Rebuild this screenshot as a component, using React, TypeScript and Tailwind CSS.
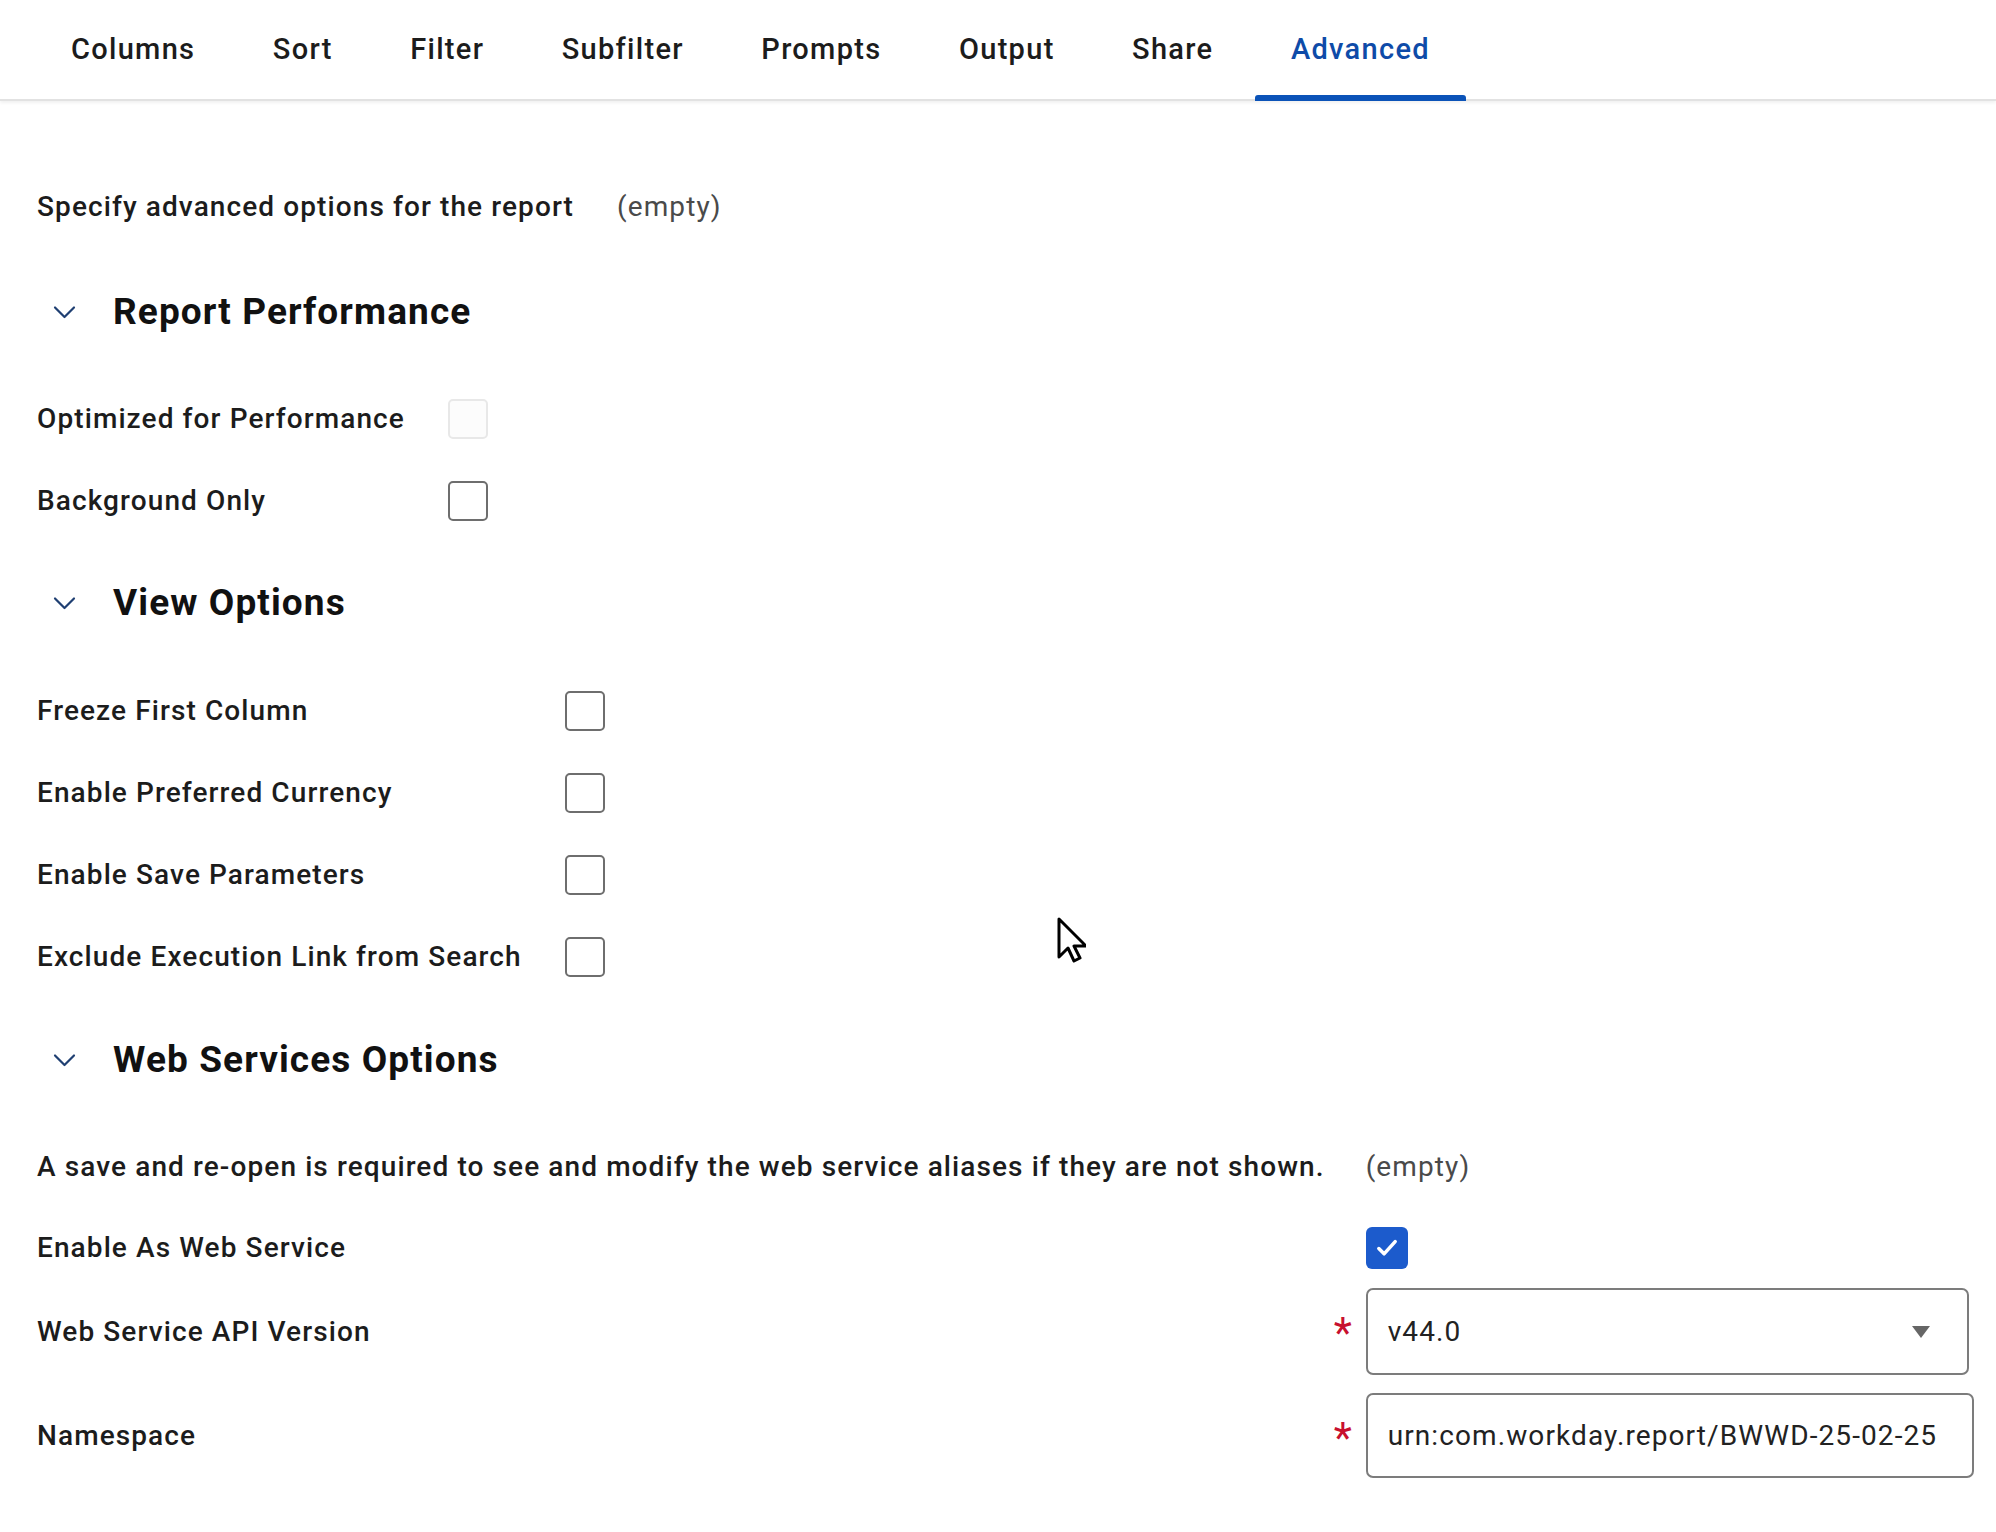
import React from "react";

const tabs = ["Columns", "Sort", "Filter", "Subfilter", "Prompts", "Output", "Share", "Advanced"];

function Checkbox({ checked = false, disabled = false }: { checked?: boolean; disabled?: boolean }) {
  if (checked) {
    return (
      <div className="w-[42px] h-[42px] rounded-[6px] bg-[#1c5bcc] flex items-center justify-center">
        <svg width="28" height="28" viewBox="0 0 24 24" fill="none">
          <path d="M5 12.5l4.5 4.5L19 6.5" stroke="white" strokeWidth="3" strokeLinecap="round" strokeLinejoin="round" />
        </svg>
      </div>
    );
  }
  return (
    <div
      className={
        disabled
          ? "w-[40px] h-[40px] rounded-[5px] border-2 border-[#e8e8e8] bg-[#fcfcfc]"
          : "w-[40px] h-[40px] rounded-[5px] border-2 border-[#6e6e6e] bg-white"
      }
    />
  );
}

function SectionHeading({ title }: { title: string }) {
  return (
    <div className="flex items-center h-[82px]">
      <div className="ml-[16px] w-[23px] flex items-center">
        <svg width="23" height="14" viewBox="0 0 23 14" fill="none">
          <path d="M2 2.5l9.5 9.5L21 2.5" stroke="#1f3f72" strokeWidth="2.2" strokeLinecap="round" strokeLinejoin="round" />
        </svg>
      </div>
      <h2 className="ml-[37px] text-[37px] font-bold text-[#111] tracking-[1.1px] whitespace-nowrap">{title}</h2>
    </div>
  );
}

function Row({ label, children, h = "h-[82px]" }: { label: string; children: React.ReactNode; h?: string }) {
  return (
    <>
      <div className={`${h} flex items-center whitespace-nowrap text-[28px] font-medium text-[#1c1c1c]`}>{label}</div>
      <div className={`${h} flex items-center`}>{children}</div>
    </>
  );
}

function Required({ children }: { children: React.ReactNode }) {
  return (
    <div className="relative">
      <span className="absolute left-[-32px] top-[24px] text-[42px] leading-none text-[#c8102e]">*</span>
      {children}
    </div>
  );
}

export default function App() {
  return (
    <div className="relative min-h-[1532px] bg-white font-['Roboto','Liberation_Sans',sans-serif] text-[#1c1c1c] tracking-[1.1px]">
      {/* tab bar */}
      <div className="h-[101px] border-b-2 border-[#e2e2e2] shadow-[0_2px_3px_rgba(0,0,0,0.06)] flex pl-[35px] gap-[5.5px]">
        {tabs.map((t) => (
          <div
            key={t}
            className={
              t === "Advanced"
                ? "relative px-[36px] flex items-center text-[29px] font-medium tracking-[1.3px] text-[#0e4ba8]"
                : "relative px-[36px] flex items-center text-[29px] font-medium tracking-[1.3px] text-[#1c1c1c]"
            }
          >
            {t}
            {t === "Advanced" && (
              <div className="absolute left-0 right-0 bottom-[-2px] h-[6px] rounded-t-[3px] bg-[#0b53b8]" />
            )}
          </div>
        ))}
      </div>

      <div className="pl-[37px] pr-[22px]">
        <div className="mt-[65px] h-[82px] flex items-center gap-[43px] text-[28px] whitespace-nowrap">
          <span className="font-medium">Specify advanced options for the report</span>
          <span className="text-[#4a4a4a]">(empty)</span>
        </div>

        <div className="mt-[23px]">
          <SectionHeading title="Report Performance" />
        </div>
        <div className="mt-[25px] grid grid-cols-[auto_1fr] gap-x-[43px]">
          <Row label="Optimized for Performance">
            <Checkbox disabled />
          </Row>
          <Row label="Background Only">
            <Checkbox />
          </Row>
        </div>

        <div className="mt-[20px]">
          <SectionHeading title="View Options" />
        </div>
        <div className="mt-[26px] grid grid-cols-[auto_1fr] gap-x-[43px]">
          <Row label="Freeze First Column">
            <Checkbox />
          </Row>
          <Row label="Enable Preferred Currency">
            <Checkbox />
          </Row>
          <Row label="Enable Save Parameters">
            <Checkbox />
          </Row>
          <Row label="Exclude Execution Link from Search">
            <Checkbox />
          </Row>
        </div>

        <div className="mt-[21px]">
          <SectionHeading title="Web Services Options" />
        </div>
        <div className="mt-[25px] grid grid-cols-[auto_1fr] gap-x-[41px]">
          <Row label="A save and re-open is required to see and modify the web service aliases if they are not shown.">
            <span className="text-[28px] text-[#4a4a4a]">(empty)</span>
          </Row>
          <Row label="Enable As Web Service" h="h-[80px]">
            <Checkbox checked />
          </Row>
          <Row label="Web Service API Version" h="h-[87px]">
            <Required>
              <div className="w-[603px] h-[87px] border-2 border-[#7c7c7c] rounded-[7px] flex items-center justify-between pl-[20px] pr-[36px]">
                <span className="text-[28px] text-[#222]">v44.0</span>
                <svg width="20" height="14" viewBox="0 0 20 14">
                  <path d="M1 1h18L10 13z" fill="#666" />
                </svg>
              </div>
            </Required>
          </Row>
          <div className="h-[18px]" />
          <div className="h-[18px]" />
          <Row label="Namespace" h="h-[85px]">
            <Required>
              <div className="w-[608px] h-[85px] border-2 border-[#7c7c7c] rounded-[7px] flex items-center pl-[20px]">
                <span className="text-[28px] text-[#222] whitespace-nowrap">urn:com.workday.report/BWWD-25-02-25</span>
              </div>
            </Required>
          </Row>
        </div>
      </div>

      {/* mouse cursor */}
      <svg className="absolute left-[1056px] top-[916px]" width="30" height="50" viewBox="0 0 30 50" fill="none">
        <path d="M3 3v38l9-9 6 13 6-3-6-12h12z" fill="white" stroke="black" strokeWidth="3" strokeLinejoin="round" />
      </svg>
    </div>
  );
}
